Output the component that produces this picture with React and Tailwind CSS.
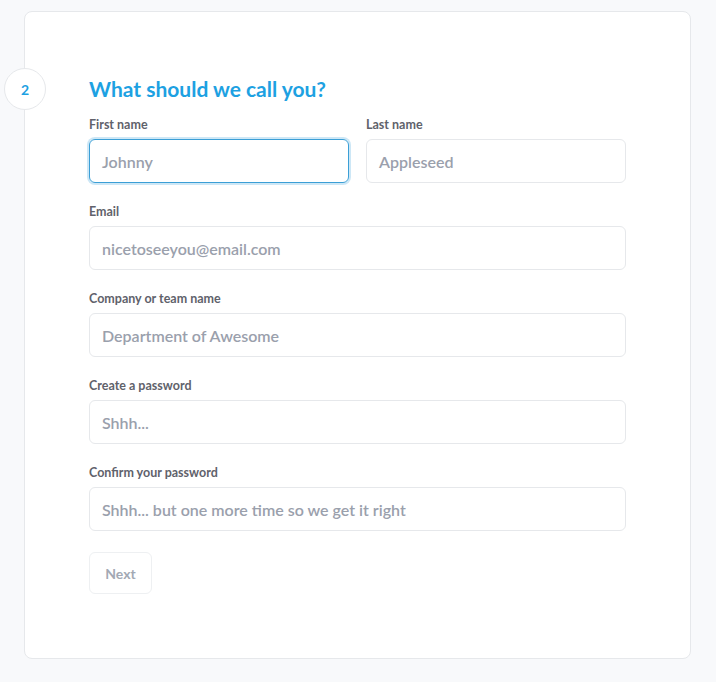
import React from "react";

const fields = [
  { id: "email", label: "Email", placeholder: "nicetoseeyou@email.com" },
  { id: "company", label: "Company or team name", placeholder: "Department of Awesome" },
  { id: "password", label: "Create a password", placeholder: "Shhh..." },
  { id: "confirm", label: "Confirm your password", placeholder: "Shhh... but one more time so we get it right" },
];

const Field = ({ label, placeholder, focused }) => (
  <div className="flex flex-col flex-1">
    <label className="text-[12.5px] leading-4 font-bold text-[#5f626b] mb-[6px]">
      {label}
    </label>
    <div
      className={
        focused
          ? "h-[44px] rounded-[6px] border border-[#3b9fd6] ring-2 ring-[#cde7f6] flex items-center px-3 pt-[2px]"
          : "h-[44px] rounded-[6px] border border-[#e6e8eb] flex items-center px-3 pt-[2px]"
      }
    >
      <span className="text-[16px] text-[#9aa0ac] font-semibold">{placeholder}</span>
    </div>
  </div>
);

export default function App() {
  return (
    <div className="min-h-screen bg-[#f8f9fb] pt-[11px] pl-6 font-['Lato',sans-serif]">
      <div className="relative w-[667px] h-[648px] bg-white border border-[#e6e8eb] rounded-[8px] pl-16 pr-16 pt-[63px]">
        {/* Step badge */}
        <div className="absolute left-[-21px] top-[56px] w-[42px] h-[42px] rounded-full bg-white border border-[#e6e8eb] flex items-center justify-center text-[14px] font-bold text-[#1da1e2]">
          2
        </div>

        <h2 className="text-[21px] leading-7 font-bold text-[#1da1e2] mb-[14px]">
          What should we call you?
        </h2>

        <div className="flex gap-[17px]">
          <Field label="First name" placeholder="Johnny" focused />
          <Field label="Last name" placeholder="Appleseed" />
        </div>

        {fields.map((f) => (
          <div key={f.id} className="mt-[21px]">
            <Field label={f.label} placeholder={f.placeholder} />
          </div>
        ))}

        <button className="mt-[21px] w-[63px] h-[42px] rounded-[6px] border border-[#eef0f2] text-[14px] font-bold text-[#a3a9b4]">
          Next
        </button>
      </div>
    </div>
  );
}
